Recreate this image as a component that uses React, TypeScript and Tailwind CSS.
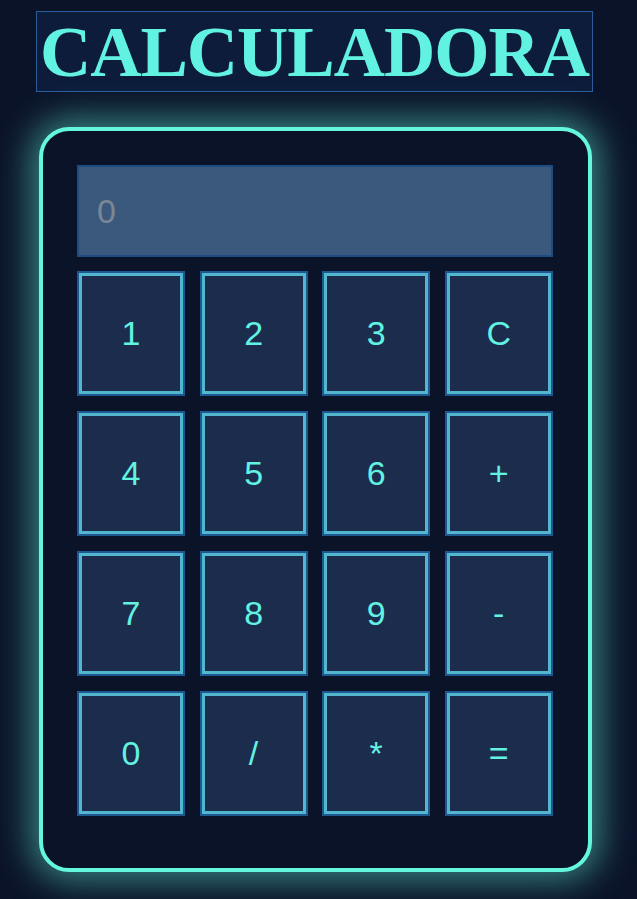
const keys = ['1', '2', '3', 'C', '4', '5', '6', '+', '7', '8', '9', '-', '0', '/', '*', '='];

export default function App() {
  return (
    <div className="min-h-screen w-full bg-[#0b1329] pt-[11px] pl-[36px]">
      <h1
        className="w-[557px] h-[81px] border border-[#2b5d9b] bg-[#0d1c3b] flex items-center justify-center text-[71px] tracking-[-1px] font-bold text-[#62f2e2]"
        style={{ fontFamily: '"Liberation Serif", "Times New Roman", serif' }}
      >
        <span className="leading-none pt-[2px]">CALCULADORA</span>
      </h1>

      <div className="ml-[3px] mt-[35px] w-[553px] h-[745px] rounded-[30px] border-4 border-[#64f7e0] bg-[#0b1329] px-[34px] pt-[34px] shadow-[0_0_34px_8px_rgba(100,247,224,0.5)]">
        <div
          className="h-[92px] w-[476px] border-2 border-[#1d4c80] bg-[#3a597c] flex items-center pl-[18px] text-[34px] text-[#7b8794]"
          style={{ fontFamily: '"Liberation Sans", Arial, sans-serif' }}
        >
          0
        </div>
        <div className="mt-[14px] grid grid-cols-[108px_108px_108px_108px] gap-x-[14.6px] gap-y-[15px]">
          {keys.map(k => (
            <button
              key={k}
              className="h-[125px] w-[108px] border-2 border-[#1d5890] bg-[#1b2c4c] shadow-[inset_0_0_0_3px_#52b6cf] flex items-center justify-center text-[34px] text-[#62f2e2]"
              style={{ fontFamily: '"Liberation Sans", Arial, sans-serif' }}
            >
              {k}
            </button>
          ))}
        </div>
      </div>
    </div>
  )
}
